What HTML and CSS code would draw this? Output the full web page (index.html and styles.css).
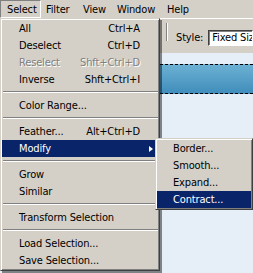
FILE: index.html
```html
<!DOCTYPE html>
<html>
<head>
<meta charset="utf-8">
<link rel="stylesheet" href="styles.css">
</head>
<body>
<div class="app">
  <nav class="menubar">
    <span class="mb-item mb-select is-open">Select</span>
    <span class="mb-item mb-filter">Filter</span>
    <span class="mb-item mb-view">View</span>
    <span class="mb-item mb-window">Window</span>
    <span class="mb-item mb-help">Help</span>
  </nav>
  <div class="options">
    <span class="grip"></span>
    <span class="opt-label">Style:</span>
    <span class="opt-input">Fixed Size</span>
  </div>
  <div class="canvas">
    <div class="band"></div>
  </div>

  <ul class="menu main-menu">
    <li class="item"><span>All</span><span class="key">Ctrl+A</span></li>
    <li class="item"><span>Deselect</span><span class="key">Ctrl+D</span></li>
    <li class="item is-disabled"><span>Reselect</span><span class="key">Shft+Ctrl+D</span></li>
    <li class="item"><span>Inverse</span><span class="key">Shft+Ctrl+I</span></li>
    <li class="sep"></li>
    <li class="item"><span>Color Range...</span></li>
    <li class="sep"></li>
    <li class="item"><span>Feather...</span><span class="key">Alt+Ctrl+D</span></li>
    <li class="item is-active has-sub"><span>Modify</span><span class="arrow"></span></li>
    <li class="sep"></li>
    <li class="item"><span>Grow</span></li>
    <li class="item"><span>Similar</span></li>
    <li class="sep"></li>
    <li class="item"><span>Transform Selection</span></li>
    <li class="sep"></li>
    <li class="item"><span>Load Selection...</span></li>
    <li class="item"><span>Save Selection...</span></li>
  </ul>

  <ul class="menu sub-menu">
    <li class="item"><span>Border...</span></li>
    <li class="item"><span>Smooth...</span></li>
    <li class="item"><span>Expand...</span></li>
    <li class="item is-active"><span>Contract...</span></li>
  </ul>
</div>
</body>
</html>
```

FILE: styles.css
```css
* { box-sizing: border-box; }
html, body { margin: 0; padding: 0; }
body {
  width: 253px;
  height: 273px;
  overflow: hidden;
  font-family: "DejaVu Sans Condensed", "DejaVu Sans", sans-serif;
  font-stretch: condensed;
  font-size: 11px;
  letter-spacing: -0.15px;
  color: #000;
  background: #e6eef7;
}
.app {
  position: relative;
  width: 253px;
  height: 273px;
  display: flex;
  flex-direction: column;
}

/* menubar */
.menubar {
  height: 18px;
  background: #d4d0c8;
  display: flex;
  align-items: stretch;
}
.mb-item {
  display: flex;
  align-items: center;
  padding-left: 5px;
  line-height: 1;
}
.mb-select { width: 41px; padding-left: 6px; }
.mb-filter { width: 37px; }
.mb-view { width: 34px; }
.mb-window { width: 50px; }
.mb-help { width: 40px; }
.mb-item.is-open {
  border: 1px solid;
  border-color: #808080 #fff #fff #808080;
  padding-top: 1px;
}

/* options bar */
.options {
  height: 35px;
  background: #d4d0c8;
  border-top: 1px solid #fff;
  display: flex;
  align-items: center;
  padding-left: 166px;
}
.grip {
  align-self: flex-start;
  margin-top: 4px;
  width: 2px;
  height: 18px;
  border-left: 1px solid #808080;
  border-right: 1px solid #fff;
}
.opt-label {
  margin-left: 8px;
  margin-top: 3px;
}
.opt-input {
  margin-left: 5px;
  margin-top: 3px;
  flex: 1;
  height: 16px;
  background: #fff;
  border: 1px solid;
  border-color: #404040 #fff #fff #404040;
  box-shadow: inset 1px 1px #808080;
  padding-left: 3px;
  display: flex;
  align-items: center;
  white-space: nowrap;
  overflow: hidden;
}

/* canvas */
.canvas {
  flex: 1;
  background: #e6eef7;
  padding-top: 11px;
}
.band {
  height: 30px;
  background:
    repeating-linear-gradient(90deg, #000 0 3px, transparent 3px 5px) top / 100% 1px no-repeat,
    repeating-linear-gradient(90deg, #000 0 3px, transparent 3px 5px) bottom / 100% 1px no-repeat,
    linear-gradient(#6db2d4, #3f8cbb);
}

/* menus */
.menu {
  position: absolute;
  margin: 0;
  list-style: none;
  background: #d4d0c8;
  border: 1px solid;
  border-color: #d4d0c8 #404040 #404040 #d4d0c8;
  box-shadow: inset 1px 1px #fff, inset -1px -1px #808080;
  padding: 1px;
}
.main-menu {
  left: 0;
  top: 18px;
  width: 160px;
  box-shadow: inset 1px 1px #fff, inset -1px -1px #808080, 2px 2px 0 rgba(0,0,0,0.45);
}
.sub-menu {
  left: 155px;
  top: 138px;
  width: 98px;
}
.item {
  height: 17px;
  display: flex;
  align-items: center;
  justify-content: space-between;
  padding: 0 18px 0 17px;
  white-space: nowrap;
}
.sub-menu .item { padding-left: 16px; }
.item.is-active {
  background: #0a246a;
  color: #fff;
}
.item.is-disabled {
  color: #808080;
  text-shadow: 1px 1px 0 #fff;
}
.arrow {
  width: 0;
  height: 0;
  border-left: 4px solid currentColor;
  border-top: 3.5px solid transparent;
  border-bottom: 3.5px solid transparent;
  margin-right: -13px;
}
.sep {
  height: 2px;
  margin: 3px 0 4px 1px;
  border-top: 1px solid #808080;
  border-bottom: 1px solid #fff;
}
```
